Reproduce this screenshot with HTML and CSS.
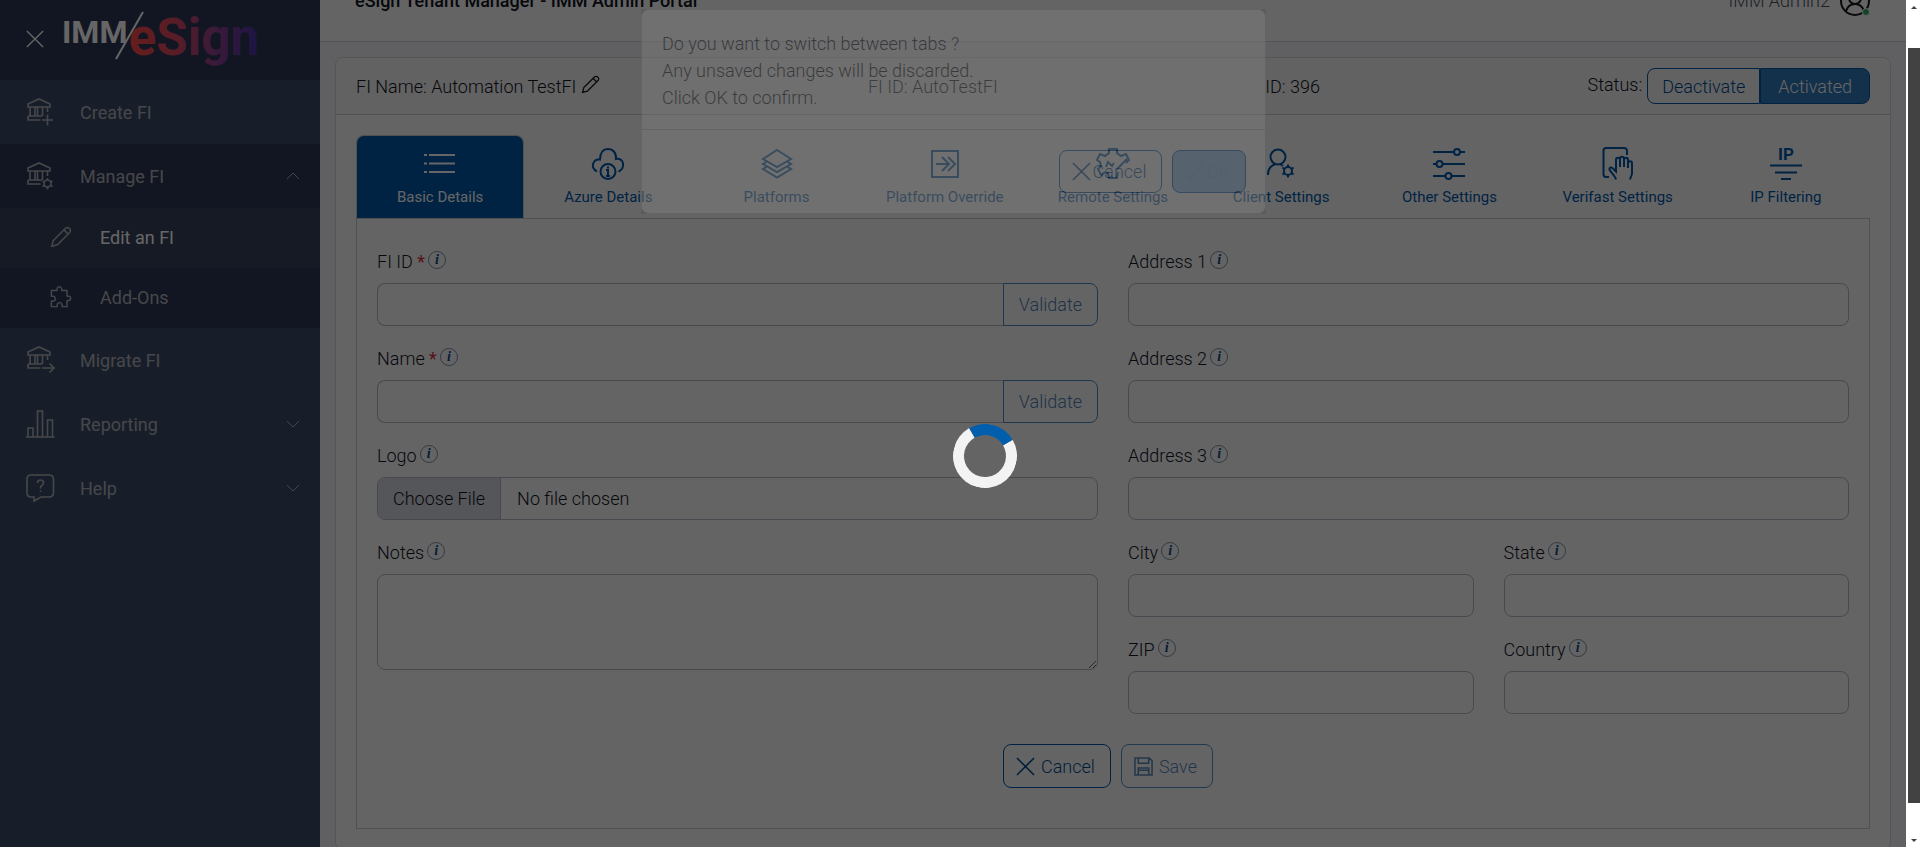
FILE: index.html
```
<!DOCTYPE html>
<html lang="en">
<head>
  <meta charset="UTF-8">
  <meta name="viewport" content="width=device-width, initial-scale=1.0">
  <title>eSign Tenant Manager - IMM Admin Portal</title>
  <link rel="stylesheet" href="styles.css">
</head>
<body>
  <svg class="symbols" aria-hidden="true">
    <symbol id="bank" viewBox="0 0 30 30">
      <path d="M2 7 13 2l11 5v3H2zM4 10v9M9 10v9M11.500 10v9M16.500 10v9M21.500 10v5M2 19h14M2 19v4h12.500"/>
    </symbol>
    <symbol id="close" viewBox="0 0 20 20"><path d="M1 1l18 18M19 1L1 19"/></symbol>
    <symbol id="pencil" viewBox="0 0 24 24">
      <path d="M2 22l1.500-6L17 2.500a2.800 2.800 0 0 1 4 0l.5.5a2.800 2.800 0 0 1 0 4L8 20.500zM15.500 4.500l4 4"/>
    </symbol>
    <symbol id="chevron" viewBox="0 0 14 8"><path d="M1 1l6 6 6-6"/></symbol>
  </svg>

  <nav class="sidebar">
    <div class="sidebar-header">
      <button class="menu-close" aria-label="Close menu"><svg><use href="#close"/></svg></button>
      <svg class="logo" viewBox="0 0 200 64" role="img" aria-label="IMM eSign">
        <defs>
          <linearGradient id="logo-fill" gradientUnits="userSpaceOnUse" x1="68" y1="0" x2="195" y2="0">
            <stop offset="0" stop-color="#ff4a48"/>
            <stop offset="0.350" stop-color="#d94a62"/>
            <stop offset="0.650" stop-color="#944190"/>
            <stop offset="1" stop-color="#4634a8"/>
          </linearGradient>
        </defs>
        <text class="logo-imm" x="-2" y="37">IMM</text>
        <text class="logo-esign" x="65" y="49">eSign</text>
        <path d="M79 6L52 53" stroke="#fff" stroke-width="2"/>
      </svg>
    </div>
    <a class="nav-item" href="#">
      <svg class="nav-icon"><use href="#bank"/><path d="M16 23h11M21.500 17.500v11"/></svg>
      <span>Create FI</span>
    </a>
    <a class="nav-item open" href="#">
      <svg class="nav-icon"><use href="#bank"/><circle cx="21.500" cy="22.500" r="3.500"/><path d="M21.500 17v2M21.500 26v2.500M16.500 20l2 1M24.500 24.500l2 1M16.500 25.500l2-1M24.500 21l2-1"/></svg>
      <span>Manage FI</span>
      <svg class="chevron up"><use href="#chevron"/></svg>
    </a>
    <a class="nav-item sub active" href="#">
      <svg class="nav-icon small"><use href="#pencil"/></svg>
      <span>Edit an FI</span>
    </a>
    <a class="nav-item sub" href="#">
      <svg class="nav-icon small" viewBox="0 0 24 24"><path d="M1.500 5h6c.8-.7-.2-1.500.3-2.500a2.600 2.600 0 0 1 4.800 0c.5 1-.5 1.800.3 2.500h5.600v6c.8.8 1.500-.3 2.500.2a2.500 2.500 0 0 1 0 4.600c-1 .5-1.700-.6-2.500.2v6.500h-5c-.8-.7 0-1.500-.5-2.700a2.700 2.700 0 0 0-5 0c-.5 1.200.3 2-.5 2.700h-6V16.500c.8-.7 1.500.2 2.500-.2a2.600 2.600 0 0 0 0-5c-1-.5-1.700.4-2.500-.3z"/></svg>
      <span>Add-Ons</span>
    </a>
    <a class="nav-item" href="#">
      <svg class="nav-icon"><use href="#bank"/><path d="M16 23h11.500M23.500 18.500l4.500 4.500-4.500 4.500"/></svg>
      <span>Migrate FI</span>
    </a>
    <a class="nav-item" href="#">
      <svg class="nav-icon"><path d="M0 28h28.500M2 28v-9h5v9M11.500 28V2h5v26M21.500 28V11h5v17"/></svg>
      <span>Reporting</span>
      <svg class="chevron"><use href="#chevron"/></svg>
    </a>
    <a class="nav-item" href="#">
      <svg class="nav-icon"><path d="M5 2h18q4.500 0 4.500 4.500v13q0 4.500-4.500 4.500h-8l-7 4V24H5Q1 24 1 19.500v-13Q1 2 5 2z"/><path d="M11.500 10q0-3 3-3t3 2.800q0 1.700-1.700 2.700-1.300.8-1.300 2.500v.5M14.500 17.500v1.500" stroke-width="1.600"/></svg>
      <span>Help</span>
      <svg class="chevron"><use href="#chevron"/></svg>
    </a>
  </nav>

  <div class="page">
    <header class="topbar">
      <h1>eSign Tenant Manager - IMM Admin Portal</h1>
      <div class="user">
        <span>IMM Admin2</span>
        <svg class="avatar" viewBox="0 0 30 30">
          <circle cx="15" cy="15" r="14"/><circle cx="15" cy="12" r="6"/><path d="M6 25.500q2-7.500 9-7.500t9 7.500"/>
          <circle class="online" cx="26" cy="26" r="3.500"/>
        </svg>
      </div>
    </header>

    <main class="card">
      <div class="card-header">
        <div class="fi-name">FI Name: Automation TestFI <svg class="edit-icon"><use href="#pencil"/></svg></div>
        <div>FI ID: AutoTestFI</div>
        <div>ID: 396</div>
        <div class="status">
          <span>Status:</span>
          <div class="toggle">
            <button>Deactivate</button><button class="on">Activated</button>
          </div>
        </div>
      </div>

      <div class="card-body">
        <div class="tabs" role="tablist">
          <button class="tab selected" role="tab">
            <svg viewBox="0 0 32 32"><path d="M0 7h3M5 7h26M0 15.500h3M5 15.500h26M0 24h3M5 24h26"/></svg>
            Basic Details
          </button>
          <button class="tab" role="tab">
            <svg viewBox="0 0 32 32"><path d="M5 23.500C1.500 21.500 0 19 1.200 15.500c1-3 3.500-4.500 6.800-4C8 5 11 1 16 1s8.500 4 8 10c3.500-1 6.500 1 7 4.500s-1 6.500-4.500 8"/><circle cx="16" cy="23.500" r="7.500"/><path d="M16 18.500v2M14 22h2v6M14 28h4"/></svg>
            Azure Details
          </button>
          <button class="tab" role="tab">
            <svg viewBox="0 0 32 32"><path d="M16 2l14 9-14 8-14-8zM6 13.500l-4 2.500 14 8 14-8-4-2.500M6 18.500L2 21l14 8.500L30 21l-4-2.500"/></svg>
            Platforms
          </button>
          <button class="tab" role="tab">
            <svg viewBox="0 0 32 32"><path d="M3 3h26v26H3zM7 16h13M13 9l7 7-7 7M19 9l7 7-7 7"/></svg>
            Platform Override
          </button>
          <button class="tab" role="tab">
            <svg viewBox="0 0 32 32"><path d="M21 24l-1 6h-8l-1-5-3-1-4 3-3-6 3-3-1-4-3-2 3-6 5 2 4-3V1h8v4l4 3 5-2 3 6-3 3M9 19l2-5 4 4 2-3M20 21l10-10"/></svg>
            Remote Settings
          </button>
          <button class="tab" role="tab">
            <svg viewBox="0 0 32 32"><circle cx="13" cy="9" r="7.500"/><path d="M3 27q0-9 8-11M15 16l3 2"/><circle cx="23" cy="23" r="4"/><path d="M23 16.500V19M23 27v2.500M17.500 19.500l2 1.500M26.500 25l2 1.500M17.500 26.500l2-1.500M26.500 21l2-1.500"/></svg>
            Client Settings
          </button>
          <button class="tab" role="tab">
            <svg viewBox="0 0 32 32"><path d="M0 4h21M27 4h5M0 16h3M10 16h22M0 28h12M19 28h13"/><circle cx="24" cy="4" r="3"/><circle cx="6.500" cy="16" r="3"/><circle cx="15.500" cy="28" r="3"/></svg>
            Other Settings
          </button>
          <button class="tab" role="tab">
            <svg viewBox="0 0 32 32"><path d="M7 29H4q-2.500 0-2.500-3V2.500q0-2.500 2.500-2.500h18q3 0 3 3v4M14 31.500c-1-4-6-8-6.500-10s2-3 4-.5l2.500 2.500V12c0-3 4-3 4 0v7-8c0-3 4-3 4 0v8-7c0-3 4-3 4 0v8-5c0-2.500 4-2.500 4 0v10c0 3-1.500 4-2 6.500"/></svg>
            Verifast Settings
          </button>
          <button class="tab" role="tab">
            <svg viewBox="0 0 32 32"><text x="16" y="12" text-anchor="middle">IP</text><path d="M0 17.500h32M5 24.500h22M11 31h10"/></svg>
            IP Filtering
          </button>
        </div>

        <form class="panel">
          <div class="columns">
            <div class="column">
              <div class="field">
                <label for="fi-id">FI ID <b>*</b><i class="info">i</i></label>
                <div class="group"><input type="text" id="fi-id"><button type="button" disabled>Validate</button></div>
              </div>
              <div class="field">
                <label for="name">Name <b>*</b><i class="info">i</i></label>
                <div class="group"><input type="text" id="name"><button type="button" disabled>Validate</button></div>
              </div>
              <div class="field">
                <label for="logo">Logo<i class="info">i</i></label>
                <input type="file" id="logo">
              </div>
              <div class="field">
                <label for="notes">Notes<i class="info">i</i></label>
                <textarea id="notes"></textarea>
              </div>
            </div>
            <div class="column">
              <div class="field">
                <label for="address1">Address 1<i class="info">i</i></label>
                <input type="text" id="address1">
              </div>
              <div class="field">
                <label for="address2">Address 2<i class="info">i</i></label>
                <input type="text" id="address2">
              </div>
              <div class="field">
                <label for="address3">Address 3<i class="info">i</i></label>
                <input type="text" id="address3">
              </div>
              <div class="pair">
                <div class="field">
                  <label for="city">City<i class="info">i</i></label>
                  <input type="text" id="city">
                </div>
                <div class="field">
                  <label for="state">State<i class="info">i</i></label>
                  <input type="text" id="state">
                </div>
              </div>
              <div class="pair">
                <div class="field">
                  <label for="zip">ZIP<i class="info">i</i></label>
                  <input type="text" id="zip">
                </div>
                <div class="field">
                  <label for="country">Country<i class="info">i</i></label>
                  <input type="text" id="country">
                </div>
              </div>
            </div>
          </div>
          <div class="actions">
            <button type="button" class="btn"><svg><use href="#close"/></svg>Cancel</button>
            <button type="button" class="btn" disabled>
              <svg viewBox="0 0 20 20"><path d="M1 1h15l3 3v15H1zM4.500 1v5.500h11V1M4.500 19v-7.500h11V19M4.500 14h11"/></svg>Save
            </button>
          </div>
        </form>
      </div>
    </main>
  </div>

  <div class="backdrop"></div>
  <div class="modal" role="dialog">
    <div class="modal-body">Do you want to switch between tabs ?<br>Any unsaved changes will be discarded.<br>Click OK to confirm.</div>
    <div class="modal-footer">
      <button class="btn"><svg><use href="#close"/></svg>Cancel</button>
      <button class="btn primary"><svg viewBox="0 0 20 20"><path d="M2 13l5 5L18 2"/></svg>OK</button>
    </div>
  </div>
  <div class="loader"><div class="spinner"></div></div>

  <div class="scrollbar" aria-hidden="true">
    <span class="arrow-up"></span>
    <span class="thumb"></span>
    <span class="arrow-down"></span>
  </div>
</body>
</html>
```
FILE: styles.css
```
* {
  box-sizing: border-box;
}

body {
  display: flex;
  height: 100vh;
  margin: 0;
  padding-right: 14px;
  overflow: hidden;
  background-color: #f0f0f4;
  color: #10141c;
  font-family: Roboto, sans-serif;
  font-size: 18px;
  font-weight: 300;
  line-height: 27px;
}

button,
input,
textarea {
  font: inherit;
  color: inherit;
}

svg {
  fill: none;
  stroke: currentColor;
  flex: none;
}

.symbols {
  position: absolute;
  width: 0;
  height: 0;
}

/* Sidebar */
.sidebar {
  flex: none;
  width: 320px;
  background-color: #3c4c68;
  color: #b0b2b8;
  font-weight: 400;
}

.sidebar-header {
  display: flex;
  align-items: flex-start;
  gap: 20px;
  height: 80px;
  padding: 6px 0 0 26px;
  background-color: #2d3955;
}

.menu-close {
  width: 18px;
  height: 18px;
  margin-top: 24px;
  padding: 0;
  border: 0;
  background: none;
  color: #fff;
}

.menu-close svg {
  display: block;
  width: 18px;
  height: 18px;
  stroke-width: 1.5;
}

.logo {
  width: 200px;
  height: 64px;
  overflow: visible;
}

.logo text {
  font-weight: 700;
  stroke: none;
}

.logo-imm {
  font-size: 32px;
  fill: #fff;
}

.logo-esign {
  font-size: 51px;
  fill: url(#logo-fill);
}

.nav-item {
  display: flex;
  align-items: center;
  gap: 24px;
  height: 64px;
  padding: 0 20px 0 26px;
  color: inherit;
  text-decoration: none;
}

.nav-icon {
  width: 30px;
  height: 30px;
  stroke-width: 1.6;
}

.nav-icon.small {
  width: 22px;
  height: 22px;
}

.nav-item.open,
.nav-item.sub {
  background-color: #2d3955;
}

.nav-item.sub {
  gap: 28px;
  height: 60px;
  padding: 0 20px 2px 50px;
}

.nav-item.sub.active {
  background-color: #39435b;
}

.nav-item.active span {
  color: #fff;
}

.chevron {
  width: 14px;
  height: 8px;
  margin-left: auto;
}

.chevron.up {
  transform: rotate(180deg);
}

/* Page */
.page {
  flex: 1;
  min-width: 0;
}

.topbar {
  display: flex;
  align-items: center;
  justify-content: space-between;
  height: 80px;
  margin-top: -38px;
  padding: 0 36px 2px 35px;
  background-color: #fafafd;
  border-bottom: 1px solid #cfd0d8;
}

.topbar h1 {
  margin: 0;
  font-size: 18px;
  font-weight: 500;
}

.user {
  display: flex;
  align-items: center;
  gap: 10px;
  color: #50545c;
}

.avatar {
  width: 30px;
  height: 30px;
  overflow: visible;
  color: #1a1a1a;
  stroke-width: 2;
}

.online {
  fill: #2fae60;
  stroke: #fafafd;
  stroke-width: 1;
}

.card {
  margin: 15px;
  border: 1px solid #d4d5dc;
  border-radius: 8px;
  background-color: #fafafd;
}

.card-header {
  display: flex;
  align-items: center;
  justify-content: space-between;
  height: 57px;
  padding: 0 20px;
  border-bottom: 1px solid #c6c8d0;
  border-radius: 8px 8px 0 0;
  background-color: #f4f4f7;
}

.fi-name,
.status {
  display: flex;
  align-items: center;
  gap: 5px;
}

.edit-icon {
  width: 19px;
  height: 19px;
  margin-bottom: 3px;
  stroke-width: 1.6;
}

.status span {
  margin-bottom: 4px;
}

.toggle {
  display: flex;
}

.toggle button {
  height: 36px;
  padding: 0 14px;
  border: 1px solid #0058a8;
  border-radius: 8px 0 0 8px;
  background: none;
  color: #004c94;
}

.toggle button.on {
  padding: 0 17px;
  border-radius: 0 8px 8px 0;
  background-color: #327abc;
  color: #fff;
}

.card-body {
  padding: 20px;
}

/* Tabs */
.tabs {
  display: flex;
}

.tab {
  display: flex;
  flex: 1;
  flex-direction: column;
  align-items: center;
  gap: 4px;
  height: 83px;
  padding: 12px 0 0;
  border: 1px solid transparent;
  border-bottom: 0;
  border-radius: 8px 8px 0 0;
  background: none;
  color: #0058a8;
  font-size: 15px;
  font-weight: 400;
}

.tab svg {
  width: 32px;
  height: 32px;
  overflow: visible;
  stroke-width: 2;
}

.tab text {
  fill: currentColor;
  stroke: none;
  font-size: 17px;
  font-weight: 700;
}

.tab.selected {
  border-color: #c6c8d0;
  background-color: #0058a8;
  color: #fff;
}

/* Form */
.panel {
  padding: 29px 20px 40px;
  border: 1px solid #c6c8d0;
}

.columns,
.pair {
  display: grid;
  grid-template-columns: 1fr 1fr;
  column-gap: 30px;
}

.column {
  display: flex;
  flex-direction: column;
  gap: 19px;
}

.field {
  display: flex;
  flex-direction: column;
  gap: 8px;
}

.field label {
  display: flex;
  align-items: center;
  height: 27px;
  white-space: pre;
}

.field b {
  color: #d9303a;
  font-weight: 400;
}

.info {
  display: flex;
  align-items: center;
  justify-content: center;
  width: 18px;
  height: 18px;
  margin: 0 0 4px 3px;
  border: 1px solid #7f93a8;
  border-radius: 50%;
  color: #0b4a8a;
  font-family: "Liberation Serif", serif;
  font-size: 14px;
  font-weight: 700;
  line-height: 14px;
}

.field input,
.field textarea {
  width: 100%;
  height: 43px;
  padding: 0 12px;
  border: 1px solid #b4b7c2;
  border-radius: 8px;
  background: none;
}

.field textarea {
  display: block;
  height: 96px;
}

.field input[type="file"] {
  padding: 0;
  line-height: 41px;
  overflow: hidden;
}

.field input::file-selector-button {
  height: 41px;
  margin: 0 16px 0 0;
  padding: 0 15px;
  border: 0;
  border-right: 1px solid #b4b7c2;
  background-color: #d4d6e0;
  color: inherit;
  font: inherit;
}

.group {
  display: flex;
}

.group input {
  border-right: 0;
  border-radius: 8px 0 0 8px;
}

.group button {
  height: 43px;
  padding: 0 15px;
  border: 1px solid #0058a8;
  border-radius: 0 8px 8px 0;
  background: none;
  color: #004c94;
  opacity: 0.7;
}

.actions {
  display: flex;
  justify-content: center;
  gap: 10px;
  margin: 30px 10px 0 0;
}

.btn {
  display: flex;
  align-items: center;
  gap: 6px;
  height: 44px;
  padding: 0 15px 0 12px;
  border: 1px solid #0058a8;
  border-radius: 8px;
  background: none;
  color: #004c94;
}

.btn svg {
  width: 19px;
  height: 19px;
  stroke-width: 1.6;
}

.btn:disabled {
  opacity: 0.65;
}

.btn.primary {
  background-color: #8abfeb;
  color: #80b2dc;
}

/* Dialog and overlays */
.backdrop,
.loader {
  position: fixed;
  inset: 0 14px 0 0;
  background-color: rgba(0, 0, 0, 0.2);
}

.loader {
  background-color: rgba(0, 0, 0, 0.5);
}

.modal {
  position: fixed;
  top: 9px;
  left: calc(50% - 319px);
  width: 625px;
  border: 1px solid #c6c8d0;
  border-radius: 8px;
  background-color: #fff;
  opacity: 0.45;
}

.modal-body {
  padding: 20px 20px 18px;
}

.modal-footer {
  display: flex;
  justify-content: flex-end;
  gap: 10px;
  padding: 20px 19px;
  border-top: 1px solid #c6c8d0;
}

.modal-footer .btn {
  gap: 2px;
  height: 43px;
}

.spinner {
  position: absolute;
  top: 50%;
  left: 50%;
  width: 64px;
  height: 64px;
  border: 11px solid #f3f3f3;
  border-top-color: #005eac;
  border-radius: 50%;
  transform: rotate(15deg);
}

.scrollbar {
  position: fixed;
  top: 0;
  right: 0;
  bottom: 0;
  display: flex;
  flex-direction: column;
  align-items: center;
  width: 14px;
  padding: 6px 0 5px 2px;
  background-color: #fff;
}

.arrow-up,
.arrow-down {
  border: 3px solid transparent;
  border-top-width: 0;
  border-bottom: 3px solid #424242;
}

.arrow-down {
  transform: rotate(180deg);
}

.thumb {
  flex: 1;
  width: 100%;
  margin: 39px 0 36px;
  background-color: #424242;
}
```
